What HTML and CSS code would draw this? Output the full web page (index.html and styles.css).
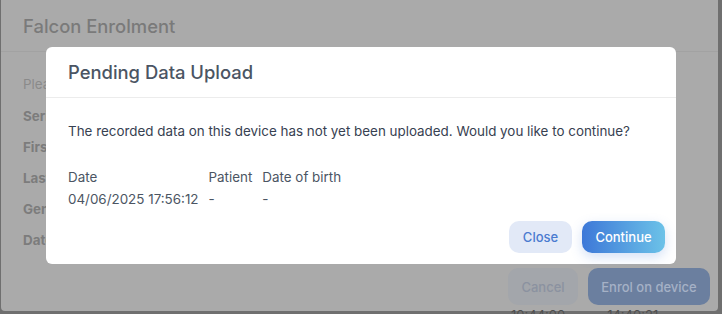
FILE: index.html
```html
<!DOCTYPE html>
<html lang="en">
<head>
  <meta charset="UTF-8" />
  <title>Falcon Enrolment</title>
  <link rel="stylesheet" href="styles.css">
</head>
<body>
  <div class="page">
    <div class="enrol-card">
      <div class="enrol-header">
        <h2>Falcon Enrolment</h2>
      </div>
      <div class="enrol-body">
        <p class="hint">Please check the patient details</p>
        <div class="field">Serial number</div>
        <div class="field">First name</div>
        <div class="field">Last name</div>
        <div class="field">Gender</div>
        <div class="field">Date of birth</div>
      </div>
      <div class="enrol-actions">
        <button class="btn-cancel">Cancel</button>
        <button class="btn-enrol">Enrol on device</button>
      </div>
    </div>
    <div class="behind-row">
      <span>10:44:00</span>
      <span>14:40:21</span>
    </div>
  </div>

  <div class="modal">
    <div class="modal-header">
      <h3>Pending Data Upload</h3>
    </div>
    <div class="modal-body">
      <p>The recorded data on this device has not yet been uploaded. Would you like to continue?</p>
      <div class="pending-table">
        <div class="th">Date</div>
        <div class="th">Patient</div>
        <div class="th">Date of birth</div>
        <div>04/06/2025 17:56:12</div>
        <div>-</div>
        <div>-</div>
      </div>
      <div class="modal-actions">
        <button class="close-btn">Close</button>
        <button class="continue-btn">Continue</button>
      </div>
    </div>
  </div>
</body>
</html>
```

FILE: styles.css
```css
body {
  font-family: 'Inter', 'Liberation Sans', sans-serif;
  margin: 0;
  padding: 0;
  background-color: #6f6f6f;
  width: 722px;
  height: 314px;
  overflow: hidden;
}
.page {
  padding: 0 4px 0 1px;
}
.enrol-card {
  background-color: #aaaaaa;
  height: 311px;
  border-radius: 0 0 4px 4px;
  display: flex;
  flex-direction: column;
  box-sizing: border-box;
}
.enrol-header {
  height: 51px;
  border-bottom: 1px solid #a2a2a2;
  padding-left: 22px;
  display: flex;
  align-items: center;
}
.enrol-header h2 {
  margin: 0;
  font-size: 18.4px;
  font-weight: 500;
  color: #7a7a7a;
}
.enrol-body {
  padding: 24px 22px 0;
  flex: 1;
}
.hint {
  margin: 0 0 16px;
  font-size: 13.4px;
  color: #8a8a8a;
}
.field {
  font-size: 13.4px;
  font-weight: 700;
  color: #7c7c7c;
  height: 31px;
}
.enrol-actions {
  display: flex;
  justify-content: flex-end;
  gap: 10px;
  padding: 0 8px 6px 0;
}
.enrol-actions button {
  font-family: 'Inter', 'Liberation Sans', sans-serif;
  font-size: 13px;
  font-weight: 500;
  height: 37px;
  border: none;
  border-radius: 10px;
  padding: 0;
  white-space: nowrap;
}
.btn-cancel {
  width: 70px;
  background-color: #a3a6ab;
  color: #8b92a0;
}
.btn-enrol {
  width: 122px;
  background-color: #6b7f9f;
  color: #a5b1c6;
}
.behind-row {
  display: flex;
  gap: 42px;
  padding-left: 510px;
  margin-top: -4px;
  font-size: 13px;
  color: #4f4f4f;
}
.modal {
  position: absolute;
  left: 46px;
  top: 47px;
  width: 630px;
  height: 217px;
  background-color: white;
  border-radius: 6px;
  color: #374151;
}
.modal-header {
  height: 50px;
  border-bottom: 1px solid #ececec;
  padding-left: 22px;
  display: flex;
  align-items: center;
}
.modal-header h3 {
  margin: 0;
  font-size: 18.4px;
  font-weight: 500;
  color: #4b5563;
}
.modal-body {
  padding: 25px 11px 0 22px;
  font-size: 13.4px;
}
.modal-body p {
  margin: 0 0 30px;
}
.pending-table {
  display: grid;
  grid-template-columns: auto auto auto;
  justify-content: start;
  column-gap: 10px;
  row-gap: 6px;
  color: #4b5563;
}
.modal-actions {
  display: flex;
  justify-content: flex-end;
  gap: 10px;
  margin-top: 14px;
}
.modal-actions button {
  font-family: 'Inter', 'Liberation Sans', sans-serif;
  font-size: 13px;
  font-weight: 500;
  height: 32px;
  border: none;
  border-radius: 10px;
  padding: 0;
  cursor: pointer;
}
.close-btn {
  width: 63px;
  background-color: #e2e9f7;
  color: #4a7bd0;
}
.continue-btn {
  width: 83px;
  background: linear-gradient(90deg, #3d78d8, #6cc2e8);
  color: white;
  box-shadow: 0 4px 12px rgba(80, 130, 220, 0.25);
}
```
